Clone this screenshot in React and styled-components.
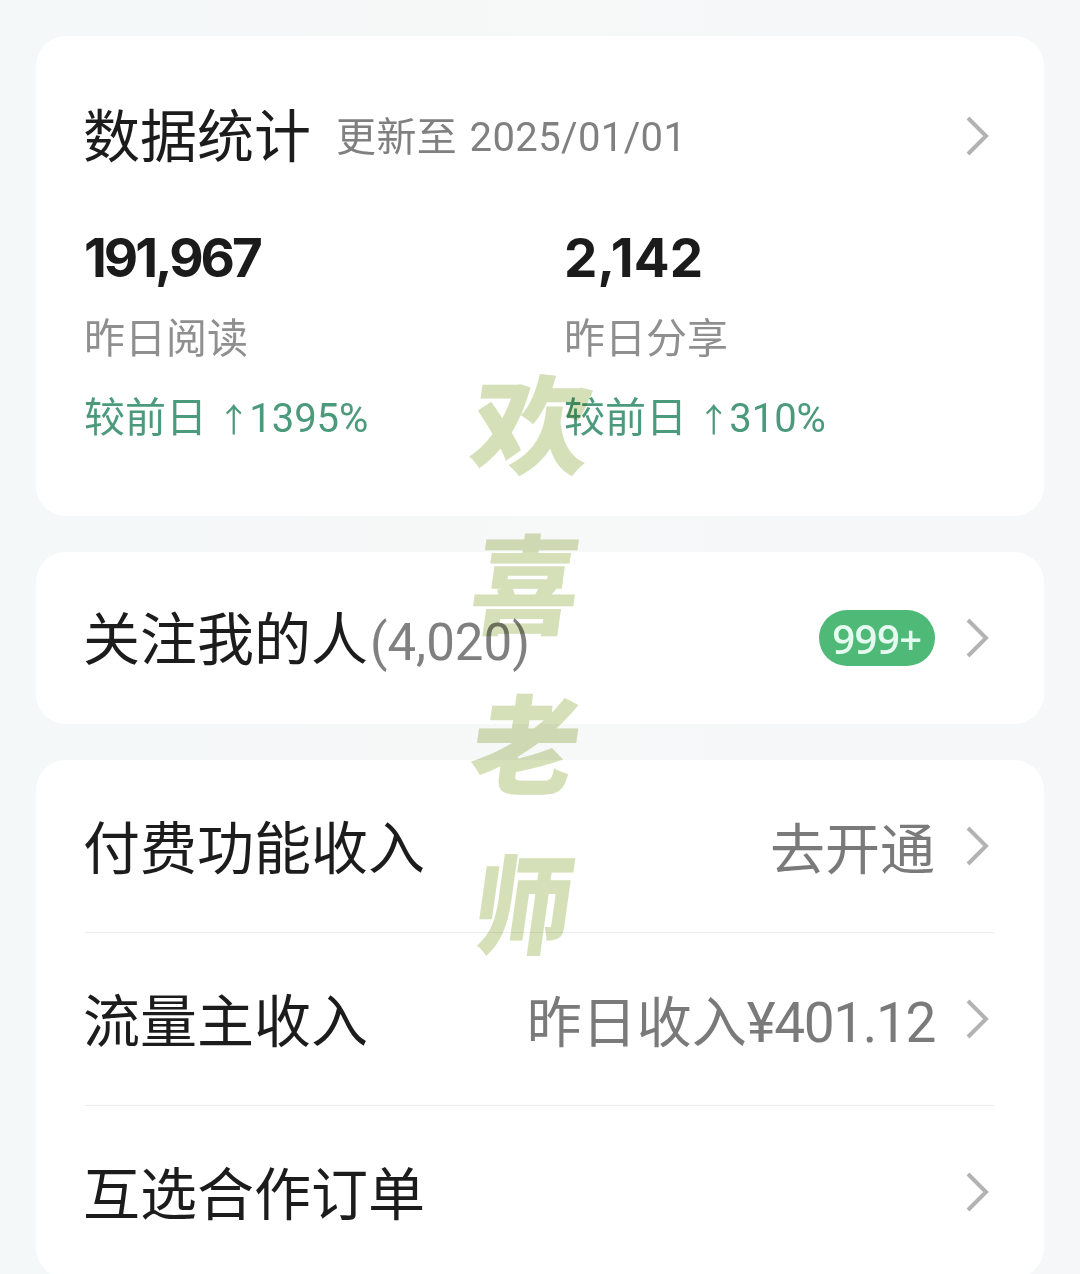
import React from "react";
import styled, { createGlobalStyle } from "styled-components";

const Global = createGlobalStyle`
  html, body { margin: 0; padding: 0; background: #f6f8f8; }
  body { font-family: "Roboto", "Noto Sans CJK SC", sans-serif; }
`;

const Page = styled.div`
  position: relative;
  width: 1080px;
  height: 1274px;
  overflow: hidden;
  box-sizing: border-box;
  padding: 36px 36px 0;
  display: flex;
  flex-direction: column;
  gap: 36px;
  background: linear-gradient(90deg, #f4f8f9 0%, #f7f8f8 50%, #f6f7f9 100%);
  font-family: "Roboto", "Noto Sans CJK SC", sans-serif;
`;

const Card = styled.section`
  flex: none;
  background: #fff;
  border-radius: 30px;
  padding: 0 50px 0 49px;
  display: flex;
  flex-direction: column;
`;

const StatsCard = styled(Card)`
  height: 480px;
  box-sizing: border-box;
  padding-top: 66px;
`;

const Header = styled.div`
  display: flex;
  align-items: center;
  height: 68px;
`;

const Title = styled.h2`
  margin: 3px 0 0 -2px;
  font-size: 57px;
  line-height: 68px;
  font-weight: 400;
  color: #1c1c1c;
`;

const Updated = styled.span`
  margin: 4px 0 0 25px;
  font-size: 40px;
  line-height: 68px;
  color: #808080;
  letter-spacing: 0.4px;
  flex: 1;
  word-spacing: 2px;
`;

const Stats = styled.div`
  display: grid;
  grid-template-columns: 480px 1fr;
  margin-top: 58px;
`;

const Stat = styled.div`
  display: flex;
  flex-direction: column;
`;

const Number = styled.div`
  margin-left: -1px;
  font-family: "Inter", "Roboto", sans-serif;
  font-size: 53px;
  line-height: 60px;
  font-weight: 700;
  color: #1b1b1b;
  letter-spacing: ${(p) => p.$tracking}px;
`;

const Label = styled.div`
  margin: 21px 0 0 -1px;
  font-size: 41px;
  line-height: 60px;
  color: #8f8f8f;
`;

const Delta = styled.div`
  margin: 19px 0 0 -1px;
  font-size: 41px;
  line-height: 60px;
  color: #4b9a7c;
  white-space: pre;
`;

const DeltaFigure = styled.span`
  font-size: 40px;
`;

const Arrow = styled.span`
  font-size: 33px;
  margin-right: -1px;
`;

const Row = styled.div`
  height: 172px;
  display: flex;
  align-items: center;
  box-sizing: border-box;
  ${(p) => (p.$divider ? "border-top: 1px solid #ececec; height: 173px;" : "")}
`;

const RowTitle = styled.span`
  margin: 8px 0 0 -2px;
  font-size: 57px;
  line-height: 68px;
  color: #1c1c1c;
  flex: 1;
  white-space: nowrap;
`;

const Count = styled.span`
  margin-left: 2px;
  font-size: 51px;
  color: #808080;
`;

const Value = styled.span`
  margin-top: 8px;
  font-size: 55px;
  line-height: 68px;
  color: #7a7a7a;
  white-space: nowrap;
`;

const Amount = styled.span`
  letter-spacing: -1.4px;
`;

const Badge = styled.span`
  width: 116px;
  height: 56px;
  border-radius: 28px;
  background: #4fb977;
  color: #e6fbef;
  font-family: "Open Sans", sans-serif;
  font-size: 40px;
  font-weight: 600;
  display: flex;
  align-items: center;
  justify-content: center;
  letter-spacing: -0.5px;
`;

const ChevronSvg = styled.svg`
  width: 24px;
  height: 40px;
  margin: 0 5px 0 30px;
  flex: none;
`;

const Chevron = () => (
  <ChevronSvg viewBox="0 0 24 40" fill="none">
    <path d="M3 2 L21 20 L3 38" stroke="#b3b3b3" strokeWidth="4" />
  </ChevronSvg>
);

const Watermark = styled.div`
  position: absolute;
  left: 462px;
  top: 339px;
  width: 130px;
  display: flex;
  flex-direction: column;
  align-items: center;
  color: #d5e0b9;
  font-family: "Noto Sans CJK SC", sans-serif;
  font-weight: 900;
  font-size: 108px;
  line-height: 160px;
  pointer-events: none;
  mix-blend-mode: multiply;
`;

const Stroke = styled.span`
  display: block;
  transform: translateX(${(p) => p.$dx}px) skewX(-8deg) scale(${(p) => p.$sx}, 1);
`;

export default function App() {
  return (
    <Page>
      <Global />
      <StatsCard>
        <Header>
          <Title>数据统计</Title>
          <Updated>更新至 2025/01/01</Updated>
          <Chevron />
        </Header>
        <Stats>
          <Stat>
            <Number $tracking={-3}>191,967</Number>
            <Label>昨日阅读</Label>
            <Delta>
              较前日 <Arrow>↑</Arrow>
              <DeltaFigure>1395%</DeltaFigure>
            </Delta>
          </Stat>
          <Stat>
            <Number $tracking={0.2}>2,142</Number>
            <Label>昨日分享</Label>
            <Delta>
              较前日 <Arrow>↑</Arrow>
              <DeltaFigure>310%</DeltaFigure>
            </Delta>
          </Stat>
        </Stats>
      </StatsCard>
      <Card>
        <Row>
          <RowTitle>
            关注我的人<Count>(4,020)</Count>
          </RowTitle>
          <Badge>999+</Badge>
          <Chevron />
        </Row>
      </Card>
      <Card>
        <Row>
          <RowTitle>付费功能收入</RowTitle>
          <Value>去开通</Value>
          <Chevron />
        </Row>
        <Row $divider>
          <RowTitle>流量主收入</RowTitle>
          <Value>
            昨日收入<Amount>¥401.12</Amount>
          </Value>
          <Chevron />
        </Row>
        <Row $divider>
          <RowTitle>互选合作订单</RowTitle>
          <Chevron />
        </Row>
      </Card>
      <Watermark>
        <Stroke $sx={1.1} $dx={6}>欢</Stroke>
        <Stroke $sx={1} $dx={0}>喜</Stroke>
        <Stroke $sx={1} $dx={0}>老</Stroke>
        <Stroke $sx={0.9} $dx={-2}>师</Stroke>
      </Watermark>
    </Page>
  );
}
